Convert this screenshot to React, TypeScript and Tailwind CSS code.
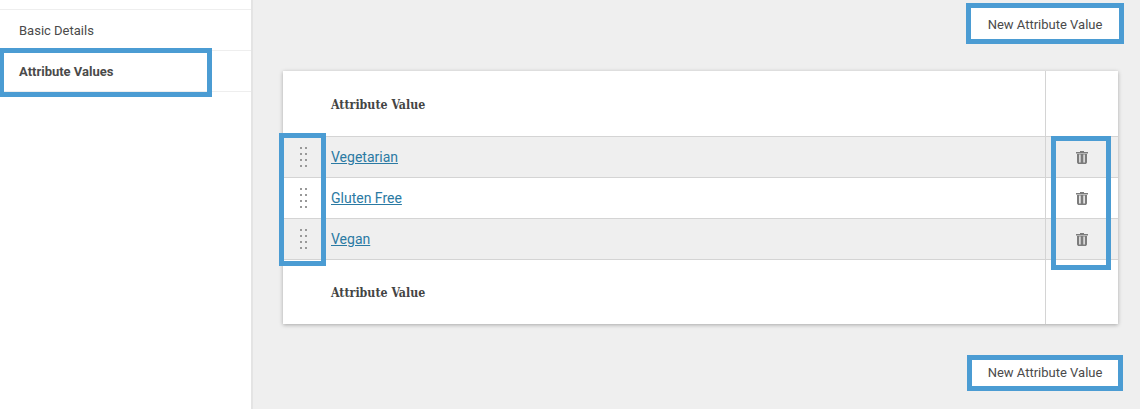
import React from "react";

const rows = [
  { name: "Vegetarian", shaded: true },
  { name: "Gluten Free", shaded: false },
  { name: "Vegan", shaded: true },
];

const GripIcon = () => (
  <svg width="7" height="20" viewBox="0 0 7 20" fill="#999999">
    {[0, 6, 12, 18].map((y) => (
      <React.Fragment key={y}>
        <rect x="0" y={y} width="2" height="2" />
        <rect x="5" y={y} width="2" height="2" />
      </React.Fragment>
    ))}
  </svg>
);

const TrashIcon = () => (
  <svg width="12" height="13" viewBox="0 0 12 13" fill="#7c7c7c">
    <path d="M4 0h4v1h4v1.5H0V1h4z" />
    <path d="M1 3H11V11.5L10 13H2L1 11.5ZM3.2 3.5V11.5H4.6V3.5ZM7.4 3.5V11.5H8.8V3.5Z" fillRule="evenodd" />
  </svg>
);

const HeaderCell = ({ className }: { className: string }) => (
  <div
    className={`flex flex-1 items-center pl-[48px] text-[12.3px] font-bold text-[#444444] font-['DejaVu_Serif_Condensed','DejaVu_Serif',serif] border-r border-[#d4d4d4] ${className}`}
  >
    Attribute Value
  </div>
);

export default function App() {
  return (
    <div className="relative flex w-[1140px] h-[409px] overflow-hidden font-['Roboto',sans-serif]">
      <aside className="w-[253px] shrink-0 bg-white border-r-2 border-[#e4e4e4] pt-[9px] text-[13px] text-[#4a4a4a]">
        <div className="flex items-center h-[41px] pl-[19px] pt-[2px] border-t border-[#eeeeee]">Basic Details</div>
        <div className="flex items-center h-[41px] pl-[19px] pt-[2px] border-t border-[#eeeeee] font-bold">Attribute Values</div>
        <div className="border-t border-[#eeeeee]" />
      </aside>

      <main className="flex-1 flex flex-col bg-[#efefef] pl-[30px] pr-[22px]">
        <div className="flex justify-end pt-[8px]">
          <button
            type="button"
            className="w-[148px] h-[31px] -mr-px pt-[3px] bg-white text-[13px] text-[#4a4a4a]"
          >
            New Attribute Value
          </button>
        </div>

        <div className="mt-[32px] flex flex-col w-[835px] h-[253px] bg-white shadow-[0_1px_4px_rgba(0,0,0,0.3)]">
          <div className="flex h-[66px] border-b border-[#d4d4d4]">
            <HeaderCell className="pt-[4px]" />
            <div className="w-[72px]" />
          </div>
          {rows.map((row) => (
            <div
              key={row.name}
              className={`flex h-[41px] border-b border-[#d4d4d4] ${row.shaded ? "bg-[#efefef]" : "bg-white"}`}
            >
              <div className="flex items-center justify-center w-[41px]">
                <GripIcon />
              </div>
              <div className="flex flex-1 items-center pl-[7px] border-r border-[#d4d4d4]">
                <a href="#" className="text-[14px] text-[#2b7aa3] underline">
                  {row.name}
                </a>
              </div>
              <div className="flex items-center justify-center w-[72px]">
                <TrashIcon />
              </div>
            </div>
          ))}
          <div className="flex flex-1">
            <HeaderCell className="pt-[3px]" />
            <div className="w-[72px]" />
          </div>
        </div>

        <div className="flex justify-end pt-[36px]">
          <button type="button" className="w-[146px] h-[26px] bg-white text-[13px] text-[#4a4a4a]">
            New Attribute Value
          </button>
        </div>
      </main>

      {/* callout frames drawn over the screenshot */}
      <div className="absolute left-[-1px] top-[48px] w-[213px] h-[49px] border-[5px] border-[#4b9cd3]" />
      <div className="absolute left-[279px] top-[133px] w-[47px] h-[133px] border-[5px] border-[#4b9cd3]" />
      <div className="absolute left-[1051px] top-[136px] w-[60px] h-[134px] border-[5px] border-[#4b9cd3]" />
      <div className="absolute left-[966px] top-[3px] w-[158px] h-[41px] border-[5px] border-[#4b9cd3]" />
      <div className="absolute left-[967px] top-[355px] w-[156px] h-[36px] border-[5px] border-[#4b9cd3]" />
    </div>
  );
}
